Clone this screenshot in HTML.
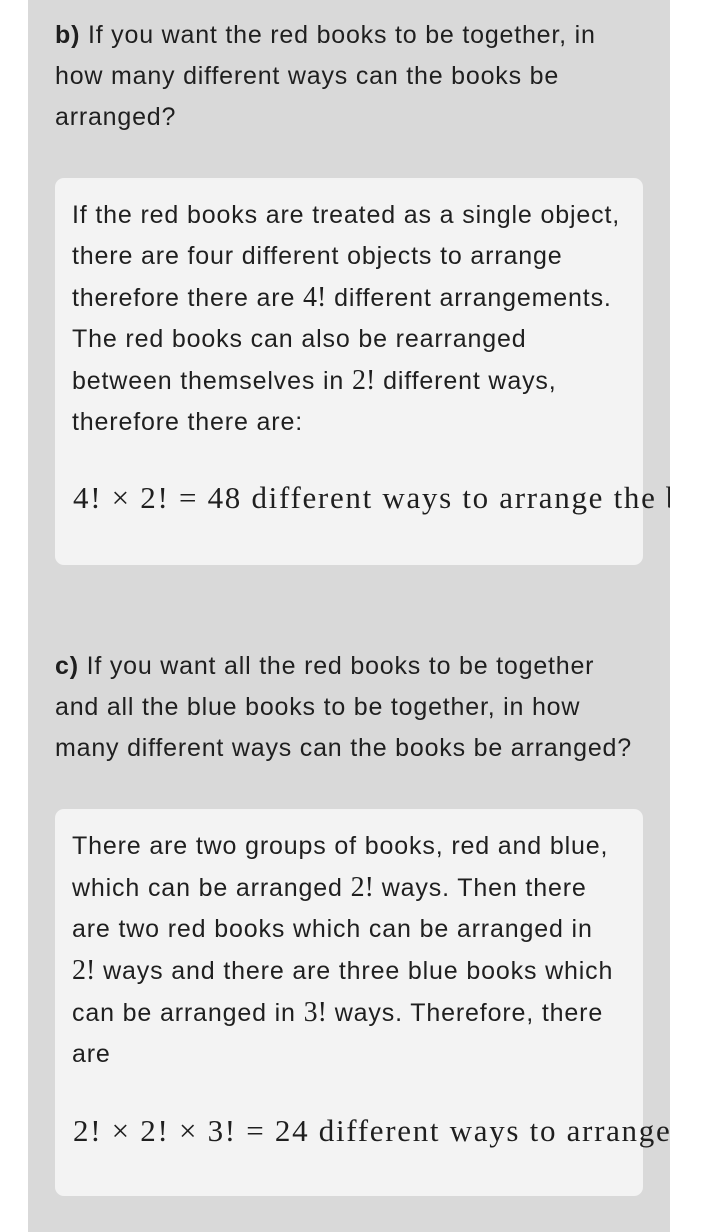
<!DOCTYPE html>
<html><head><meta charset="utf-8"><style>
body{margin:0;background:#fff;width:720px;height:1232px;overflow:hidden;font-family:"Liberation Sans",Roboto,sans-serif;color:#1f1f1f}
.panel{position:absolute;left:28px;top:0;width:642px;height:1232px;background:#d9d9d9;overflow:hidden}
.h{position:absolute;left:27px;white-space:nowrap;font-size:25px;line-height:41px;letter-spacing:0.8px}
.box{position:absolute;left:27px;width:588px;background:#f3f3f3;border-radius:9px}
.t{position:absolute;left:17px;white-space:nowrap;font-size:25px;line-height:41px;letter-spacing:0.85px}
.m{font-family:"Liberation Serif",serif;font-size:28px;letter-spacing:0}
.eq{position:absolute;left:18px;white-space:nowrap;font-family:"Liberation Serif",serif;font-size:31px;line-height:40px;letter-spacing:1.7px}
</style></head><body>
<div class="panel">
<div class="h" style="top:15px"><b>b)</b> If you want the red books to be together, in<br>how many different ways can the books be<br>arranged?</div>
<div class="box" style="top:178px;height:387px">
<div class="t" style="top:17px">If the red books are treated as a single object,<br>there are four different objects to arrange<br>therefore there are <span class="m">4!</span> different arrangements.<br>The red books can also be rearranged<br>between themselves in <span class="m">2!</span> different ways,<br>therefore there are:</div>
<div class="eq" style="top:300px">4! × 2! = 48 different ways to arrange the books</div>
</div>
<div class="h" style="top:646px"><b>c)</b> If you want all the red books to be together<br>and all the blue books to be together, in how<br>many different ways can the books be arranged?</div>
<div class="box" style="top:809px;height:387px">
<div class="t" style="top:17px">There are two groups of books, red and blue,<br>which can be arranged <span class="m">2!</span> ways. Then there<br>are two red books which can be arranged in<br><span class="m">2!</span> ways and there are three blue books which<br>can be arranged in <span class="m">3!</span> ways. Therefore, there<br>are</div>
<div class="eq" style="top:302px">2! × 2! × 3! = 24 different ways to arrange the books</div>
</div>
</div>
</body></html>
